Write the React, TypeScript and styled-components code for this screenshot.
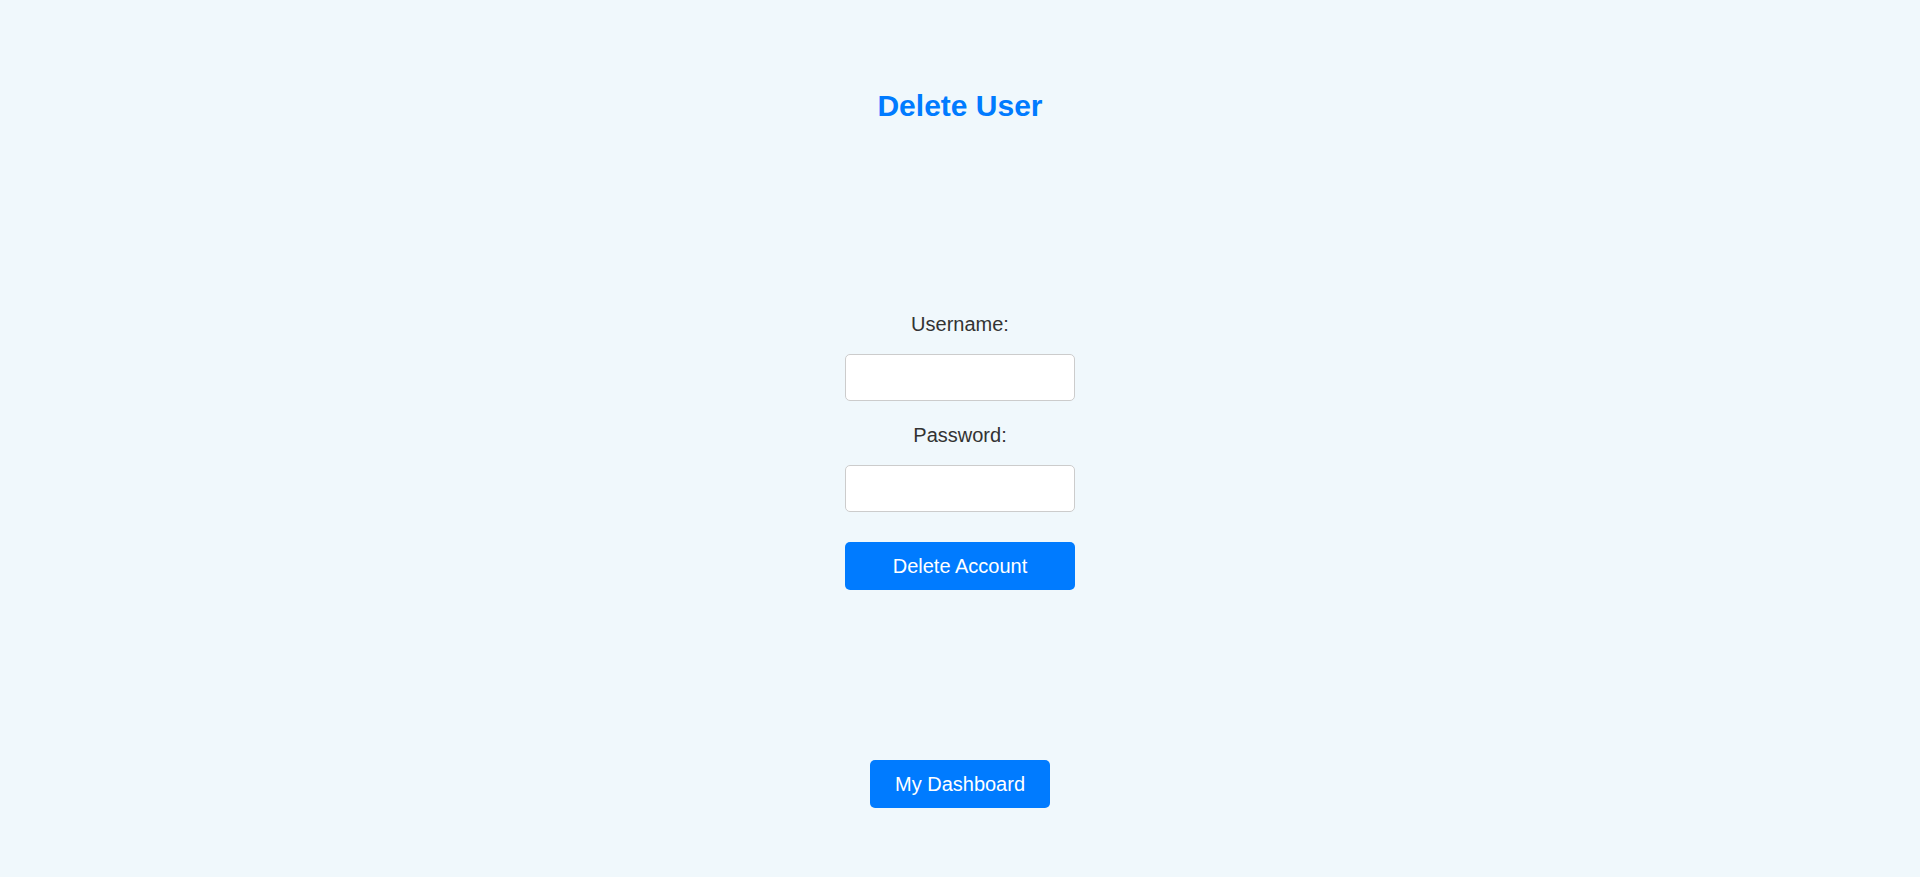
import React from "react";
import styled, { createGlobalStyle } from "styled-components";

const GlobalStyle = createGlobalStyle`
  html, body {
    margin: 0;
    padding: 0;
    background: #f0f8fc;
    font-family: "Liberation Sans", Arial, sans-serif;
  }
  * { box-sizing: border-box; }
`;

const Page = styled.div`
  min-height: 877px;
  display: flex;
  flex-direction: column;
  align-items: center;
  background: #f0f8fc;
`;

const Title = styled.h1`
  margin: 88px 0 0;
  font-size: 30px;
  line-height: 36px;
  font-weight: bold;
  color: #007bff;
`;

const Form = styled.form`
  margin-top: 188px;
  width: 230px;
  display: flex;
  flex-direction: column;
  align-items: center;
`;

const Label = styled.label`
  font-size: 20px;
  line-height: 24px;
  color: #333;
  margin-bottom: 18px;
`;

const Input = styled.input<{ $last?: boolean }>`
  width: 230px;
  height: 47px;
  border: 1px solid #ccc;
  border-radius: 5px;
  background: #fff;
  padding: 0 10px;
  font-size: 16px;
  margin-bottom: ${(p) => (p.$last ? "30px" : "22px")};
  outline: none;
`;

const Button = styled.button<{ $full?: boolean }>`
  width: ${(p) => (p.$full ? "230px" : "180px")};
  height: 48px;
  border: none;
  border-radius: 5px;
  background: #007bff;
  color: #fff;
  font-family: "Liberation Sans", Arial, sans-serif;
  font-size: 20px;
  line-height: 23px;
  padding: 12px 0;
  cursor: pointer;
`;

const DashButton = styled(Button)`
  margin-top: 170px;
`;

export default function App() {
  return (
    <>
      <GlobalStyle />
      <Page>
        <Title>Delete User</Title>
        <Form onSubmit={(e) => e.preventDefault()}>
          <Label htmlFor="username">Username:</Label>
          <Input id="username" type="text" />
          <Label htmlFor="password">Password:</Label>
          <Input id="password" type="password" $last />
          <Button type="submit" $full>
            Delete Account
          </Button>
        </Form>
        <DashButton type="button">My Dashboard</DashButton>
      </Page>
    </>
  );
}
